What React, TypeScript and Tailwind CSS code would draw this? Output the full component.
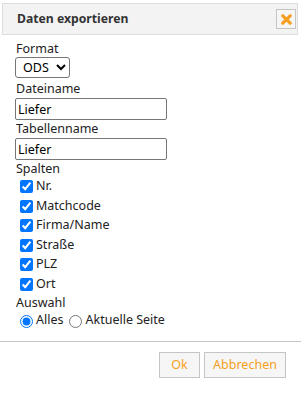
import React from "react";

const COLUMNS = ["Nr.", "Matchcode", "Firma/Name", "Straße", "PLZ", "Ort"];

export default function App() {
  return (
    <div className="w-[305px] h-[394px] bg-white text-[12.5px] text-[#222] font-['Noto_Sans',sans-serif]">
      {/* Title bar */}
      <div className="pt-[3px] px-[2px] w-[300px]">
        <div className="h-[32px] flex items-center justify-between bg-[#f3f3f3] border border-[#dddddd] pl-[14px] pr-[1px]">
          <span className="font-bold text-[12.2px] text-[#333]">Daten exportieren</span>
          <button className="w-[20px] h-[20px] flex items-center justify-center border border-[#c5c5c5] bg-[#f6f6f6]">
            <svg width="11" height="11" viewBox="0 0 11 11">
              <path d="M1.8 1.8L9.2 9.2M9.2 1.8L1.8 9.2" stroke="#f5a020" strokeWidth="3.2" strokeLinecap="round" />
            </svg>
          </button>
        </div>
      </div>

      {/* Form */}
      <div className="pl-[16px] pt-[5px]">
        <div className="h-[17px] leading-[17px]">Format</div>
        <select className="block h-[21px] w-[55px] -ml-px border border-[#767676] rounded-[3px] bg-white text-[12.5px] text-black pl-[3px]">
          <option>ODS</option>
        </select>
        <div className="mt-[2px] h-[18px] leading-[18px]">Dateiname</div>
        <input
          defaultValue="Liefer"
          className="block -ml-px h-[22px] w-[152px] border border-[#767676] rounded-[2px] px-[2px] text-[12.5px] text-black outline-none"
        />
        <div className="h-[18px] leading-[18px]">Tabellenname</div>
        <input
          defaultValue="Liefer"
          className="block -ml-px h-[22px] w-[152px] border border-[#767676] rounded-[2px] px-[2px] text-[12.5px] text-black outline-none"
        />
        <div className="h-[17px] leading-[17px]">Spalten</div>
        <div className="flex flex-col">
          {COLUMNS.map((c) => (
            <label key={c} className="h-[19.5px] flex items-center">
              <input type="checkbox" defaultChecked className="m-[3px_3px_3px_4px] w-[13px] h-[13px] accent-[#0075ff]" />
              <span>{c}</span>
            </label>
          ))}
        </div>
        <div className="h-[17px] leading-[17px]">Auswahl</div>
        <div className="h-[18px] flex items-center">
          <label className="flex items-center">
            <input type="radio" name="sel" defaultChecked className="m-[3px_3px_0_4px] w-[13px] h-[13px] accent-[#0075ff]" />
            <span>Alles</span>
          </label>
          <label className="flex items-center ml-[2px]">
            <input type="radio" name="sel" className="m-[3px_3px_0_4px] w-[13px] h-[13px]" />
            <span>Aktuelle Seite</span>
          </label>
        </div>
      </div>

      {/* Footer */}
      <div className="mt-[12px] w-[301px] border-t border-[#c5c5c5] flex justify-end gap-[4px] pt-[10px] pr-[15px]">
        <button className="h-[26px] w-[41px] border border-[#c5c5c5] bg-[#f6f6f6] text-[#f5a020]">Ok</button>
        <button className="h-[26px] w-[82px] border border-[#c5c5c5] bg-[#f6f6f6] text-[#f5a020]">Abbrechen</button>
      </div>
    </div>
  );
}
